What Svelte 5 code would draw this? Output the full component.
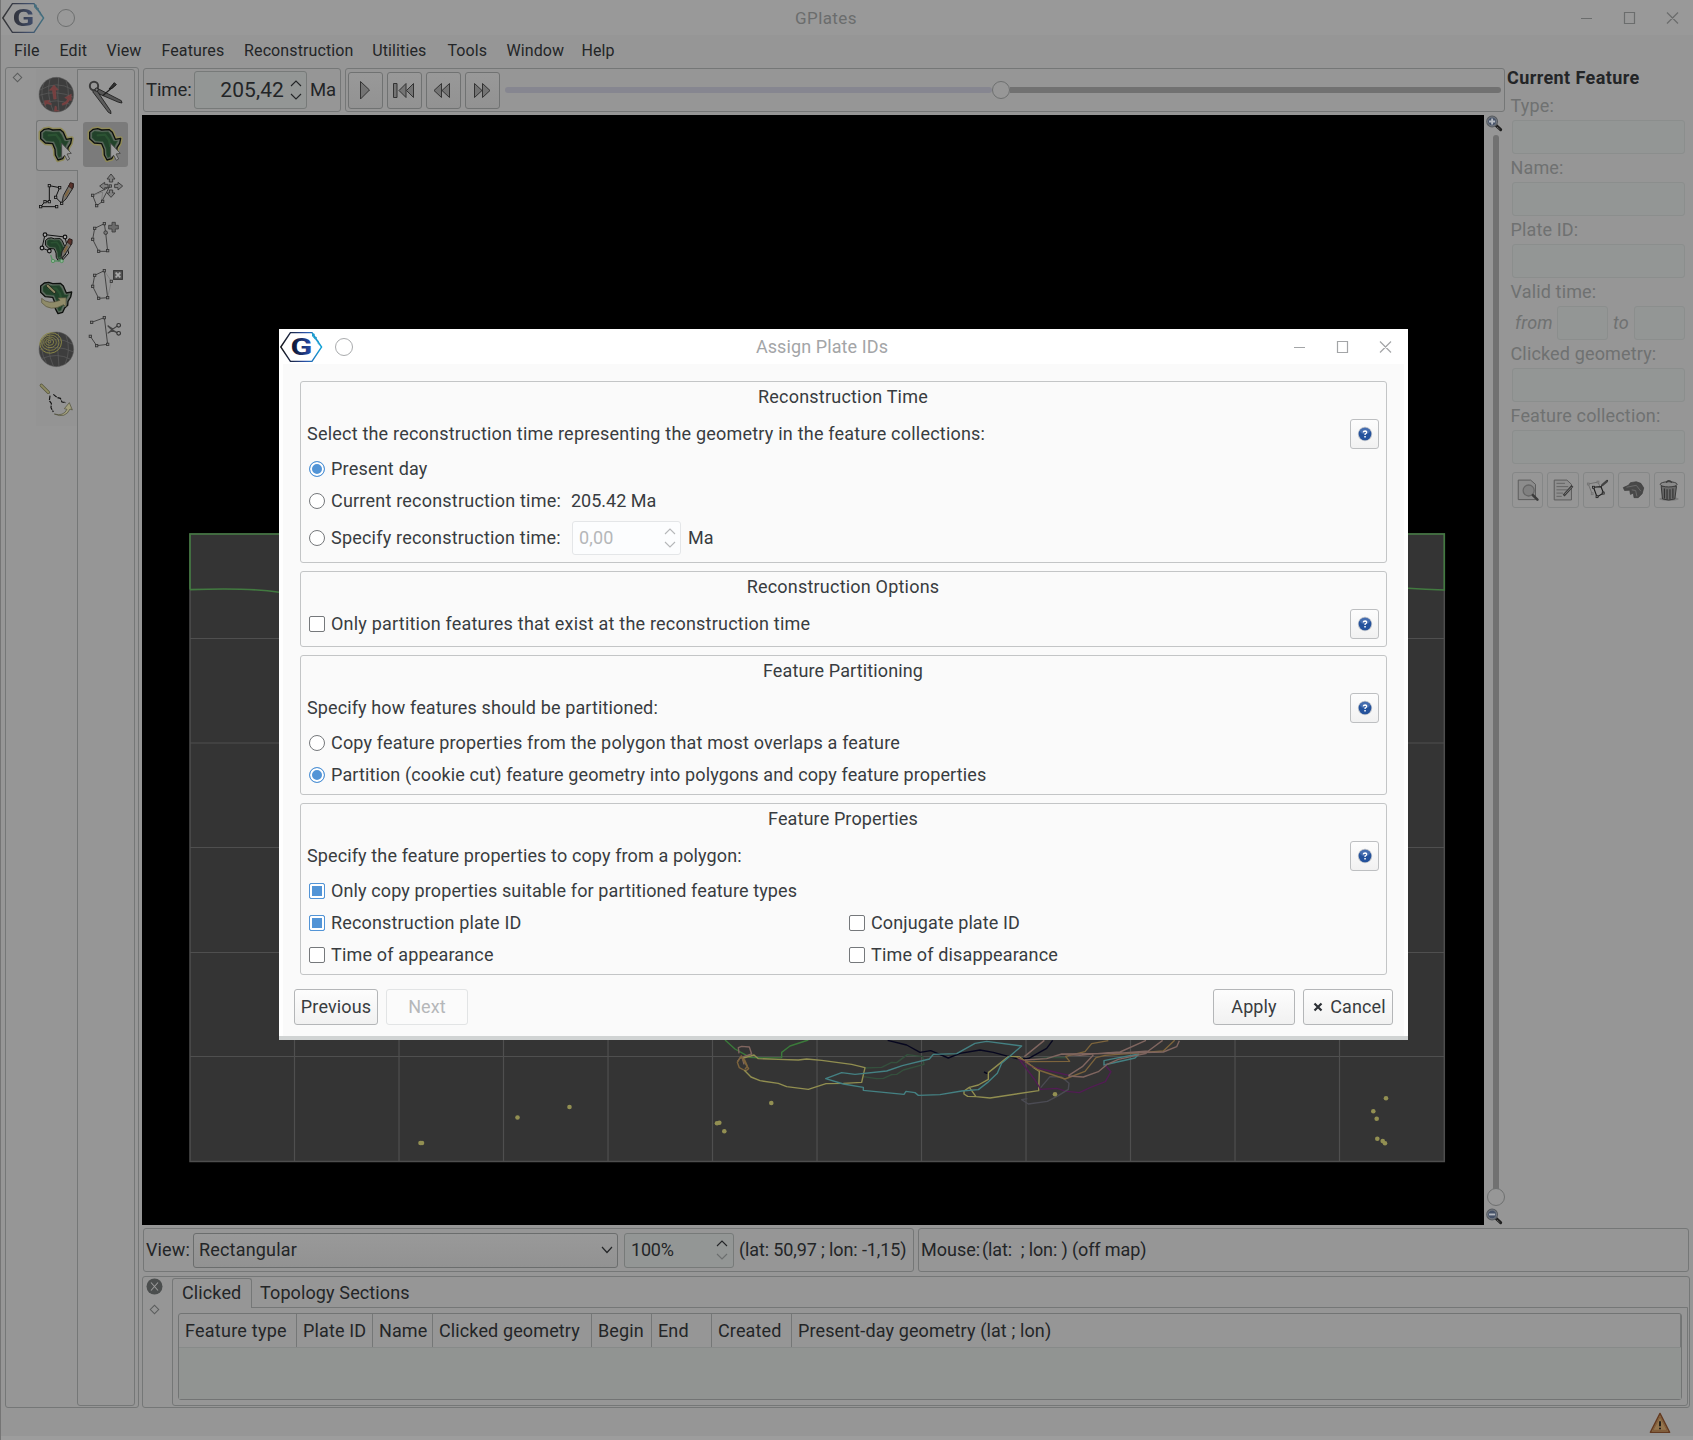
<script lang="ts">
  const menus = ['File', 'Edit', 'View', 'Features', 'Reconstruction', 'Utilities', 'Tools', 'Window', 'Help'];
  const menuWidths = [45.5, 47, 55, 82.6, 128.2, 75.2, 59, 75, 50];

  const africa = 'M122 217L133 208L146 206L158 210L181 209L190 217L199 238L215 235L212 250L204 263L203 275L194 283L188 296L174 300L166 285L165 268L158 251L136 249L122 236Z';

  const columns = [
    { label: 'Feature type', width: 118 },
    { label: 'Plate ID', width: 76 },
    { label: 'Name', width: 60 },
    { label: 'Clicked geometry', width: 159 },
    { label: 'Begin', width: 60 },
    { label: 'End', width: 60 },
    { label: 'Created', width: 80 },
    { label: 'Present-day geometry (lat ; lon)', width: 889 }
  ];

  const meridians = [294.5, 399, 503.5, 608, 712.5, 817, 921.5, 1026, 1130.5, 1235, 1339.5];
  const parallels = [638.5, 743, 847.5, 952.5, 1056.5];
  const points = [
    [420.5, 1143], [422, 1143], [517.5, 1117.5], [569.5, 1107], [771.3, 1103], [717, 1123.3], [719.3, 1122.7],
    [724.3, 1131.3], [1055, 1094.3], [1386, 1098.3], [1373.3, 1111.3], [1376.7, 1118.7], [1377.3, 1138.7],
    [1382.7, 1141], [1385, 1143.3]
  ];
</script>

{#snippet logo(id: string, dim: boolean)}
  <svg class="logo" class:dim viewBox="0 0 44 32" width="44" height="32">
    <defs>
      <linearGradient id={id} x1="0" y1="0" x2="1" y2="0">
        <stop offset="0" stop-color="#15171c" /><stop offset=".3" stop-color="#1c2a50" />
        <stop offset=".6" stop-color="#2a50a8" /><stop offset="1" stop-color="#12a5d8" />
      </linearGradient>
      <linearGradient id={id + 'g'} x1="0" y1="0" x2="1" y2="0">
        <stop offset="0" stop-color="#0c1024" /><stop offset="1" stop-color="#2750b4" />
      </linearGradient>
    </defs>
    <path d="M1.800 16L11.400 1.600H33L42.600 16L33 30.400H11.400Z" fill="none" stroke="url(#{id})" stroke-width="1.400" />
    <path d="M33 2L36 3L34.500 5.500L38 6L36.500 9L40 10L38.500 12.500L42.500 16L33 5Z" fill="#1ba0d0" />
    <text x="11.500" y="24.300" textLength="22" lengthAdjust="spacingAndGlyphs" class="logo-g" fill="url(#{id + 'g'})">G</text>
  </svg>
{/snippet}

{#snippet controls()}
  <svg class="controls" viewBox="0 0 100 14" width="100" height="14" fill="none" stroke="currentColor" stroke-width="1.2">
    <path d="M1 7.500H12M44.500 1.500H54.500V12.500H44.500ZM87 1.500L98 12.500M98 1.500L87 12.500" />
  </svg>
{/snippet}

{#snippet arrows(dimDown: boolean)}
  <svg viewBox="0 0 12 20" width="12" height="20" fill="none" stroke="currentColor" stroke-width="1.1">
    <path d="M1 6L6 1L11 6" /><path d="M1 14L6 19L11 14" opacity={dimDown ? 0.35 : 1} />
  </svg>
{/snippet}

{#snippet help()}
  <button class="help" aria-label="Help">
    <svg viewBox="0 0 16 16" width="16" height="16">
      <circle cx="8" cy="8" r="7.200" fill="#bfc3ca" />
      <circle cx="8" cy="8" r="6.300" fill="#24529c" />
      <ellipse cx="8" cy="5" rx="5" ry="3.300" fill="#5c80bd" opacity=".6" />
      <path d="M6.200 6.400Q6.400 5 8.100 5Q9.800 5.100 9.700 6.300Q9.600 7.300 8.100 8.100V9" fill="none" stroke="#fff" stroke-width="1.300" />
      <rect x="7.300" y="10" width="1.500" height="1.500" fill="#fff" />
    </svg>
  </button>
{/snippet}

{#snippet africaIcon(dy: number, dx: number, glow: boolean)}
  <g transform="translate({dx} {dy})" stroke-linejoin="round">
    {#if glow}<path d={africa} fill="#98925a" stroke="#8f8a58" stroke-width="13" />{/if}
    <path d={africa} fill="#5f6a60" stroke="#0d100d" stroke-width="4" />
    <path d="M129 219L137 213L158 216L178 215L185 224L194 243L206 243L198 257L196 271L187 279L183 290L176 293L172 283L171 266L162 245L139 243L129 233Z" fill="#22422a" stroke="#3a5a40" stroke-width="1.500" />
    <path d="M146 226L168 224L180 240L184 258" fill="none" stroke="#2b5232" stroke-width="7" stroke-linecap="round" />
  </g>
{/snippet}

{#snippet cursor(dx: number)}
  <path transform="translate({dx} 0)" d="M185 250V294L194 286L202 301L209 297L201 282L214 280Z" fill="#9c9c9c" stroke="#444" stroke-width="2.500" />
{/snippet}

{#snippet pencil(dy: number)}
  <g transform="translate(0 {dy})">
    <path d="M186 428L190 407L211 369L220 371V382L198 417Z" fill="#77736c" stroke="#222" stroke-width="3" />
    <path d="M206 379L211 368L220 371L217 387Z" fill="#5a332c" stroke="#2c1815" stroke-width="2" />
    <path d="M194 406L204 388L208 392L198 411Z" fill="#806640" />
  </g>
{/snippet}

{#snippet sphere(cy: number)}
  <circle cx="169" {cy} r="52" fill="#3d3d3d" stroke="#606060" stroke-width="1.500" />
  <g fill="none" stroke="#5e5e5e" stroke-width="2">
    <path transform="translate(0 {cy - 104})" d="M120 90Q170 60 216 88M117 106Q170 88 221 112M124 132Q172 112 212 134M150 56Q138 105 160 154M176 52Q170 105 177 156M198 62Q214 106 195 149M132 68Q116 105 139 144" />
  </g>
{/snippet}

{#snippet nodes(list: number[][])}
  {#each list as [x, y]}<rect x={x - 3.500} y={y - 3.500} width="7" height="7" fill="#888" />{/each}
{/snippet}

{#snippet magnifier(plus: boolean)}
  <svg viewBox="0 0 50 50" width="17" height="17">
    <path d="M28 29L43 43" stroke="#1d1d1d" stroke-width="9" stroke-linecap="round" />
    <path d="M33 36L41 43" stroke="#666" stroke-width="3" stroke-dasharray="3 2" />
    <circle cx="18" cy="19" r="15" fill="#455167" stroke="#575b60" stroke-width="5" />
    <circle cx="18" cy="19" r="13" fill="none" stroke="#848b92" stroke-width="2" />
    <path d={plus ? 'M9 19H27M18 10V28' : 'M9 19H27'} stroke="#b4b9c0" stroke-width="5.500" />
  </svg>
{/snippet}

{#snippet field(label: string)}
  <div class="flabel">{label}</div>
  <div class="fbox"></div>
{/snippet}

<div class="window">
  <header class="titlebar">
    {@render logo('lgMain', true)}
    <i class="pin"></i>
    <span class="title">GPlates</span>
    {@render controls()}
  </header>

  <nav class="menubar">
    {#each menus as m, i}<span style:width="{menuWidths[i]}px">{m}</span>{/each}
  </nav>

  <div class="body">
    <aside class="tools">
      <div class="grip"><i class="diamond"></i></div>
      <div class="tabs">
        <div class="tab">
          <svg viewBox="105 27 126 153" width="42" height="51">
            {@render sphere(104)}
            <g fill="#763f3f" stroke="#8a5050" stroke-width="1">
              <path d="M161 118L157 91L148 91L162 75L175 89L167 91L169 117Z" />
              <path d="M186 131Q202 125 202 117L194 113L214 102V122L208 120Q204 133 187 136Z" />
              <path d="M133 122L150 121L144 126L154 130V134L140 131L135 137Z" /><path d="M165 138L170 140V150L178 153L163 154Z" />
            </g>
          </svg>
        </div>
        <div class="tab on">
          <svg viewBox="105 180 126 153" width="42" height="51">{@render africaIcon(0, 0, true)}{@render cursor(0)}</svg>
        </div>
        <div class="tab">
          <svg viewBox="105 333 126 153" width="42" height="51">
            <path d="M122 440H170M122 440L135 425H148V377L179 383L167 412L185 430" fill="none" stroke="#111" stroke-width="3" />
            {#each [[122, 440], [170, 440], [135, 425], [148, 425], [148, 377], [179, 383], [167, 412], [185, 430]] as [x, y]}
              <rect x={x - 3.500} y={y - 3.500} width="7" height="7" fill="#999" stroke="#111" stroke-width="2.500" />
            {/each}
            {@render pencil(0)}
          </svg>
        </div>
        <div class="tab">
          <svg viewBox="105 486 126 153" width="42" height="51">
            <g transform="translate(46 381) scale(.74)">{@render africaIcon(0, 0, false)}</g>
            <path d="M158 603H186M158 603L152 585M186 603L180 590" stroke="#5a9066" stroke-width="4" />
            <g fill="#8fb698" stroke="#55915f" stroke-width="3"><circle cx="159" cy="603" r="5" /><circle cx="185" cy="603" r="5" /></g>
            <path d="M148 573L126 564L135 524L195 531L206 580L188 600" fill="none" stroke="#111" stroke-width="3" />
            {#each [[135, 524], [195, 531], [126, 564], [148, 573]] as [x, y]}<circle cx={x} cy={y} r="5.500" fill="#aaa" stroke="#111" stroke-width="3.500" />{/each}
            <g transform="translate(-4 168)">{@render pencil(0)}</g>
          </svg>
        </div>
        <div class="tab">
          <svg viewBox="105 639 126 153" width="42" height="51">
            {@render africaIcon(461, 0, false)}
            <path d="M143 677L163 696" stroke="#1c1c14" stroke-width="9" stroke-linecap="round" />
            <path d="M143 677L163 696" stroke="#8d8864" stroke-width="6" stroke-linecap="round" />
            <path d="M125 715Q145 735 180 721L174 714L198 713L198 741L191 734Q150 758 125 728Z" fill="#8f8b69" stroke="#55523c" stroke-width="2" />
          </svg>
        </div>
        <div class="tab">
          <svg viewBox="105 792 126 153" width="42" height="51">
            {@render sphere(868)}
            <g fill="none" stroke="#8b8845" stroke-width="2.600">
              <ellipse cx="152" cy="849" rx="33" ry="30" transform="rotate(-25 152 849)" />
              <ellipse cx="151" cy="848" rx="26" ry="23" /><ellipse cx="150" cy="847" rx="19" ry="16" /><ellipse cx="149" cy="846" rx="12" ry="10" /><circle cx="148" cy="845" r="4" />
            </g>
          </svg>
        </div>
        <div class="tab">
          <svg viewBox="105 945 126 153" width="42" height="51">
            <path d="M124 976L145 997" stroke="#55543c" stroke-width="10" stroke-linecap="round" />
            <path d="M124 976L145 997" stroke="#8e8b64" stroke-width="6" stroke-linecap="round" />
            <path d="M150 1007L148 1022L154 1030L153 1043L160 1056" fill="none" stroke="#111" stroke-width="3.500" stroke-dasharray="13 3" />
            <path d="M160 1003L172 1013L181 1015L186 1026L198 1028" fill="none" stroke="#111" stroke-width="3.500" stroke-dasharray="13 3" />
            <path d="M163 1062Q190 1070 201 1048L193 1046L208 1028L217 1050L210 1047Q196 1077 163 1062Z" fill="#a29f7e" stroke="#4c4b38" stroke-width="2" />
          </svg>
        </div>
      </div>
      <div class="palette">
        <div class="tool">
          <svg viewBox="249 45 135 135" width="45" height="45">
            <path d="M294 86L364 122L366 129L356 127L286 97Z" fill="#555" stroke="#1b1b1b" stroke-width="2.500" />
            <path d="M288 88L332 153L333 161L325 157L278 95Z" fill="#5c5c5c" stroke="#1b1b1b" stroke-width="2.500" />
            <path d="M308 107L342 78" stroke="#222" stroke-width="4" /><path d="M327 87L343 68L349 74L336 85Z" fill="#333" stroke="#1a1a1a" stroke-width="3" />
            <circle cx="282" cy="78" r="12.500" fill="none" stroke="#3a3a3a" stroke-width="6" /><circle cx="290" cy="89" r="5" fill="#777" stroke="#222" stroke-width="3" />
          </svg>
        </div>
        <div class="tool on"><svg viewBox="249 186 135 135" width="45" height="45">{@render africaIcon(0, 147, true)}{@render cursor(147)}</svg></div>
        <div class="tool">
          <svg viewBox="249 327 135 135" width="45" height="45" stroke="#333" stroke-width="2.500" fill="none">
            <path d="M290 437L278 406L328 381L304 427L290 437" /><path d="M308 396L304 427M278 406L308 396" stroke="#777" />
            <g fill="#808080" stroke="#404040" stroke-width="3"><path d="M333 342L345 357H338V366H328V357H321Z" /><path d="M333 412L345 399H338V390H328V399H321Z" /><path d="M299 378L314 367V373H324V383H314V390Z" /><path d="M368 378L354 367V373H344V383H354V390Z" /></g>
            {@render nodes([[278, 406], [290, 437], [308, 424], [331, 378]])}
          </svg>
        </div>
        <div class="tool">
          <svg viewBox="249 468 135 135" width="45" height="45" stroke="#333" stroke-width="2.500" fill="none">
            <path d="M313 491L284 505L278 538L296 574H323L317 518Z" />
            <path d="M336 487H346V496H355V507H346V516H336V507H326V496H336Z" fill="#6b6b6b" stroke="#3d3d3d" />
            {@render nodes([[313, 491], [284, 505], [278, 538], [296, 574], [323, 572]])}<circle cx="317" cy="518" r="5.500" fill="#777" />
          </svg>
        </div>
        <div class="tool">
          <svg viewBox="249 609 135 135" width="45" height="45" stroke="#333" stroke-width="2.500" fill="none">
            <path d="M313 632L284 646L278 679L296 715L323 713Z" /><path d="M313 632L334 664L323 713" stroke="#777" stroke-width="2" />
            <rect x="341" y="632" width="26" height="26" fill="#5a5a5a" stroke="#333" stroke-width="3.500" /><path d="M347 638L361 652M361 638L347 652" stroke="#aaa" stroke-width="5" />
            {@render nodes([[313, 632], [284, 646], [278, 679], [296, 715], [323, 713], [334, 664]])}
          </svg>
        </div>
        <div class="tool">
          <svg viewBox="249 750 135 135" width="45" height="45" stroke="#333" stroke-width="2.500" fill="none">
            <path d="M275 787L313 773L323 853L290 857L271 829" />
            <path d="M323 797Q335 812 351 818M323 820Q336 808 351 799M323 797L340 808M323 820L340 810" stroke="#444" stroke-width="3.500" />
            <circle cx="356" cy="796" r="5.500" stroke-width="3.500" /><circle cx="356" cy="820" r="5.500" stroke-width="3.500" />
            {@render nodes([[275, 787], [313, 773], [323, 853], [290, 857], [271, 829]])}
          </svg>
        </div>
      </div>
    </aside>

    <div class="main">
      <div class="upper">
        <div class="center">
          <div class="timebar">
            <div class="panel time">
              <span class="t-label">Time:</span>
              <div class="spin big"><span>205,42</span>{@render arrows(false)}</div>
              <span class="t-ma">Ma</span>
            </div>
            <div class="panel anim">
              <div class="pbtn"><svg viewBox="0 0 34 36" width="34" height="36"><path d="M12.500 9.500V27L21.500 18Z" /></svg></div>
              <div class="pbtn"><svg viewBox="0 0 34 36" width="34" height="36"><path d="M6.500 11.500H10V25.500H6.500ZM19 11.500V25.500L12 18.500ZM26.500 11.500V25.500L19.500 18.500Z" /></svg></div>
              <div class="pbtn"><svg viewBox="0 0 34 36" width="34" height="36"><path d="M15.500 11.500V25.500L8 18.500ZM23.500 11.500V25.500L16 18.500Z" /></svg></div>
              <div class="pbtn"><svg viewBox="0 0 34 36" width="34" height="36"><path d="M9.500 11.500V25.500L17 18.500ZM17.500 11.500V25.500L25 18.500Z" /></svg></div>
              <div class="hslider"><i class="played"></i><i class="knob"></i><i class="rest"></i></div>
            </div>
          </div>
          <div class="view">
            <svg class="map" viewBox="142 115 1342 1110" width="1342" height="1110">
              <rect x="142" y="115" width="1342" height="1110" fill="#000" />
              <rect x="190" y="534" width="1254.300" height="627.500" fill="#343434" stroke="#4e4e4e" stroke-width="1.500" />
              <g stroke="#4f4f4f" stroke-width="1.200">
                {#each meridians as x}<path d="M{x} 534V1161" />{/each}
                {#each parallels as y}<path d="M190 {y}H1444" />{/each}
              </g>
              <path d="M190 589.600V534H1444.300V590Q1425 589.500 1408 588.300M190 589.600Q250 587.500 279 592.300" fill="none" stroke="#427a40" stroke-width="1.600" />
              <g transform="translate(700 1030) scale(.33333)" fill="none" stroke-width="4.200" stroke-linejoin="round">
                <path stroke="#3b7a3a" d="M75 30L105 57L150 82L190 84L245 83V67L270 48L325 30" />
                <path stroke="#34503d" d="M492 114L545 112L575 97L590 98L622 74L668 80L672 103L610 120L590 133L575 134L550 145L530 146L490 140" />
                <path stroke="#34503d" d="M1000 90L1045 82L1100 83" />
                <path stroke="#07071f" d="M563 31L620 45L660 67L692 62L745 84L780 70L840 60L880 67L950 86L985 86L1040 55L1058 31M852 126L860 130L866 128" />
                <path stroke="#806660" d="M117 70L115 53L125 49L148 51L155 72L120 84L112 95M126 80L132 103" />
                <path stroke="#7d643c" d="M125 76L112 97L118 113L137 123L146 116L132 95L124 80L134 90L142 108L135 118" />
                <path stroke="#918e50" d="M130 84L152 78L162 75L175 86L235 88L295 90L320 87L365 91L455 103L495 113L485 157L430 160L378 161L325 178L260 170L235 160L180 152L153 141L133 121" />
                <path stroke="#918e50" d="M808 172L835 165L865 148V128L925 80L957 80L1000 112L1018 124L1016 182L870 204L828 200L808 172L792 183V192L803 199L828 200" />
                <path stroke="#448183" d="M377 146L425 128L465 133L560 123L607 107L688 87L700 73L770 71L825 40L860 34L965 48L905 100L892 130L862 158L835 179L785 183L720 194L655 196L645 188L618 184L612 193L490 181V172L430 162Z" />
                <path stroke="#448183" d="M1317 72L1305 84L1212 105V92L1245 85L1317 72" />
                <path stroke="#521c54" d="M955 82L995 110L1050 123L1110 137M955 84L1005 150L1022 178L1070 175L1100 184L1138 188L1170 173L1216 155L1233 125L1215 105" />
                <path stroke="#4b4b53" d="M1022 173L1050 140L1085 141L1107 160L1105 178L1075 197L1042 214L985 222L965 209L982 206" />
                <path stroke="#7d643c" d="M950 82L985 95L1109 94L1097 79L1155 65L1175 41L1225 32M975 95L1015 120L1095 147L1155 124L1188 83L1215 76L1390 63L1424 31" />
                <path stroke="#806660" d="M973 80L1033 31M975 90L1040 86L1085 72L1140 76L1200 70L1260 66L1338 31M1085 72L1250 70L1345 63L1388 31M1145 72L1390 66L1430 50L1438 32M1105 137L1147 110L1180 75M1105 138L1150 141L1195 125L1220 104L1255 88L1310 76L1340 70" />
              </g>
              <g fill="#928f52">{#each points as [x, y]}<circle cx={x} cy={y} r="2.300" />{/each}</g>
            </svg>
            <div class="zoomer">
              {@render magnifier(true)}
              <i class="vtrack"></i><i class="knob"></i>
              {@render magnifier(false)}
            </div>
          </div>
        </div>

        <aside class="feature">
          <h2>Current Feature</h2>
          {@render field('Type:')}
          {@render field('Name:')}
          {@render field('Plate ID:')}
          <div class="flabel">Valid time:</div>
          <div class="ftimes"><em>from</em><i class="fbox"></i><em class="to">to</em><i class="fbox"></i></div>
          {@render field('Clicked geometry:')}
          {@render field('Feature collection:')}
          <div class="fbtns">
            <div class="fbtn">
              <svg viewBox="225 592 80 76" width="26" height="25" fill="none"><path d="M235 598H273L288 611V658H235Z" fill="#8c8c8c" stroke="#5a5a5a" stroke-width="3" /><circle cx="267" cy="630" r="17" fill="#808080" stroke="#666" stroke-width="4" /><path d="M280 644L294 658" stroke="#3c3c3c" stroke-width="8" stroke-linecap="round" /></svg>
            </div>
            <div class="fbtn">
              <svg viewBox="330 592 80 76" width="26" height="25" fill="none"><path d="M343 598H382L396 611V659H343Z" fill="#8f8f8f" stroke="#5a5a5a" stroke-width="3" /><path d="M350 608H376M350 618H386M350 628H384M350 638H370M350 648H366" stroke="#5c5c5c" stroke-width="2.500" /><path d="M372 646L399 616" stroke="#3c3c3c" stroke-width="8" /><path d="M375 642L397 619" stroke="#777" stroke-width="3" /></svg>
            </div>
            <div class="fbtn">
              <svg viewBox="438 592 80 76" width="26" height="25" fill="none"><path d="M460 640L448 610L478 604L485 620" stroke="#6f6f6f" stroke-width="3" /><g fill="#8c8c8c" stroke="#6f6f6f" stroke-width="2"><rect x="445" y="607" width="6" height="6" /><rect x="475" y="601" width="6" height="6" /><rect x="457" y="637" width="6" height="6" /></g><path d="M464 620L487 618L495 638L475 650ZM487 618L508 598" stroke="#1d1d1d" stroke-width="3.500" /><path d="M490 614L507 600" stroke="#444" stroke-width="7" /><g fill="#969696" stroke="#222" stroke-width="2.500"><rect x="461" y="617" width="6" height="6" /><rect x="491" y="635" width="6" height="6" /><rect x="472" y="646" width="6" height="6" /></g></svg>
            </div>
            <div class="fbtn">
              <svg viewBox="543 592 80 76" width="26" height="25"><path d="M550 621L566 614L572 606L590 603L604 608L613 622L608 640L596 652H583L581 638L572 642L570 629L554 630Z" fill="#484848" stroke="#3a3a3a" stroke-width="2" /><path d="M560 620L590 614L604 632M576 628L588 630L592 648" fill="none" stroke="#6a6a6a" stroke-width="3" /></svg>
            </div>
            <div class="fbtn">
              <svg viewBox="648 592 80 76" width="26" height="25" fill="none"><ellipse cx="688" cy="656" rx="30" ry="6" fill="#7c7c7c" /><path d="M664 617L668 656Q687 663 706 656L711 617Z" fill="#6a6a6a" stroke="#363636" stroke-width="3" /><path d="M674 624V655M682 626V658M691 626V658M700 624V655" stroke="#333" stroke-width="3.500" /><ellipse cx="687" cy="611" rx="26" ry="8" fill="#8a8a8a" stroke="#3c3c3c" stroke-width="3" /><path d="M679 606Q687 594 697 606" stroke="#3c3c3c" stroke-width="4" /></svg>
            </div>
          </div>
        </aside>
      </div>

      <div class="viewbar">
        <div class="panel vb1">
          <span class="v-label">View:</span>
          <div class="combo"><span>Rectangular</span><svg viewBox="0 0 12 8" width="12" height="8" fill="none" stroke="currentColor" stroke-width="1.200"><path d="M1 1L6 6.500L11 1" /></svg></div>
          <div class="spin small"><span>100%</span>{@render arrows(true)}</div>
          <span class="coords">(lat: 50,97 ; lon: -1,15)</span>
        </div>
        <div class="panel vb2"><span class="mouse">Mouse:</span><span class="coords">(lat:&nbsp; ; lon: ) (off map)</span></div>
      </div>

      <div class="dock">
        <div class="dgrip">
          <svg viewBox="0 0 17 17" width="17" height="17"><circle cx="8.500" cy="8.500" r="8" fill="#4b4e4e" /><path d="M5 4.500L12 12.500M12 4.500L5 12.500" stroke="#999" stroke-width="1.100" /></svg>
          <i class="diamond"></i>
        </div>
        <div class="dcontent">
          <div class="dtabs"><span class="dtab on">Clicked</span><span class="dtab topo">Topology Sections</span></div>
          <div class="dpane">
            <div class="table">
              <div class="thead">{#each columns as c}<span style:width="{c.width}px">{c.label}</span>{/each}</div>
              <div class="tbody"></div>
            </div>
          </div>
        </div>
      </div>
    </div>
  </div>

  <footer class="status">
    <svg viewBox="0 0 66 64" width="22" height="22"><path d="M33 3L62 60H4Z" fill="#8a6a45" stroke="#643a20" stroke-width="4" stroke-linejoin="round" /><path d="M33 14L54 54H12Z" fill="#94754e" stroke="#7a5433" stroke-width="2" /><path d="M33 27V42M33 46V51" stroke="#111" stroke-width="5" /></svg>
  </footer>

  <div class="dialog">
    <header class="titlebar dlg">
      {@render logo('lgDlg', false)}
      <i class="pin"></i>
      <span class="title">Assign Plate IDs</span>
      {@render controls()}
    </header>
    <div class="dbody">
      <section class="g1">
        <h3 class="wide">Reconstruction Time</h3>
        <div class="lead"><span class="wide">Select the reconstruction time representing the geometry in the feature collections:</span>{@render help()}</div>
        <div class="opt first"><i class="radio on"></i><span class="wide">Present day</span></div>
        <div class="opt"><i class="radio"></i><span class="fixed wide">Current reconstruction time:</span><span class="tight">205.42 Ma</span></div>
        <div class="opt tall"><i class="radio"></i><span class="fixed wide">Specify reconstruction time:</span><div class="spin off"><span>0,00</span>{@render arrows(false)}</div><span class="tight">Ma</span></div>
      </section>
      <section class="g2">
        <h3 class="wide">Reconstruction Options</h3>
        <div class="lead opt2"><i class="check"></i><span class="wide">Only partition features that exist at the reconstruction time</span>{@render help()}</div>
      </section>
      <section class="g3">
        <h3>Feature Partitioning</h3>
        <div class="lead"><span>Specify how features should be partitioned:</span>{@render help()}</div>
        <div class="opt first"><i class="radio"></i><span class="mid">Copy feature properties from the polygon that most overlaps a feature</span></div>
        <div class="opt"><i class="radio on"></i><span>Partition (cookie cut) feature geometry into polygons and copy feature properties</span></div>
      </section>
      <section class="g4">
        <h3>Feature Properties</h3>
        <div class="lead"><span>Specify the feature properties to copy from a polygon:</span>{@render help()}</div>
        <div class="opt first"><i class="check on"></i><span>Only copy properties suitable for partitioned feature types</span></div>
        <div class="pair">
          <div class="opt"><i class="check on"></i><span class="mid">Reconstruction plate ID</span></div>
          <div class="opt"><i class="check"></i><span>Conjugate plate ID</span></div>
          <div class="opt"><i class="check"></i><span class="mid">Time of appearance</span></div>
          <div class="opt"><i class="check"></i><span class="mid">Time of disappearance</span></div>
        </div>
      </section>
      <div class="buttons">
        <button class="prev">Previous</button>
        <button class="next" disabled>Next</button>
        <span class="grow"></span>
        <button class="apply">Apply</button>
        <button class="cancel"><svg viewBox="0 0 10 10" width="10" height="10"><path d="M1.500 1.500L8.500 8.500M8.500 1.500L1.500 8.500" stroke="#2d3136" stroke-width="2.200" /></svg>Cancel</button>
      </div>
    </div>
  </div>
</div>

<style>
  :global(body) { margin: 0; background: #969696; }
  .window, .window :global(*) { box-sizing: border-box; }
  .window {
    position: relative; width: 1693px; height: 1440px; overflow: hidden; display: flex; flex-direction: column;
    background: #969696; color: #232527; font: 18px/22px Roboto, sans-serif; white-space: nowrap;
    border-left: 1px solid #757575; letter-spacing: .12px;
  }
  svg { display: block; flex: none; }
  i { display: block; flex: none; font-style: normal; }

  .titlebar { position: relative; display: flex; align-items: center; height: 35px; background: #999; color: #6b6d6d; padding: 1px 13px 0 0; flex: none; }
  .titlebar .title { position: absolute; left: 0; right: 0; text-align: center; font-size: 17px; padding-right: 42px; top: 7px; letter-spacing: .4px; }
  .logo.dim { opacity: .72; filter: brightness(.62) saturate(.7); }
  .logo-g { font: 700 24px Roboto, sans-serif; }
  .pin { width: 18px; height: 18px; border: 1.300px solid #6d6f6f; border-radius: 50%; margin-left: 11.500px; }
  .controls { margin-left: auto; }

  .menubar { display: flex; height: 32px; padding: 5px 0 0 13px; font-size: 16px; flex: none; letter-spacing: .1px; }
  .menubar span { flex: none; }

  .body { display: flex; height: 1341px; padding-left: 4px; flex: none; }
  .tools { display: flex; width: 134px; height: 1341px; border: 1px solid #757777; border-radius: 3px; padding: 1px 3px 1px 0; }
  .grip { width: 30px; padding: 5px 0 0 8px; }
  .diamond { width: 7px; height: 7px; border: 1px solid #5b5d5d; transform: rotate(45deg); }
  .tabs { width: 42px; margin-right: -1px; z-index: 1; }
  .tab { height: 51px; width: 41px; overflow: hidden; background: #949494; }
  .tab svg { margin-left: -1px; }
  .tab.on { border: 1px solid #757777; border-right: 0; width: 42px; background: #969696; border-radius: 3px 0 0 3px; }
  .tab.on svg { margin: -1px 0 0 -2px; }
  .palette { flex: 1; border: 1px solid #757777; border-radius: 0 3px 3px 3px; padding: 5px 0 0 5px; display: flex; flex-direction: column; gap: 2px; }
  .tool { width: 45px; height: 45px; }
  .tool.on { background: #7b7b7b; border-radius: 3px; }

  .main { width: 1551px; margin-left: 3px; display: flex; flex-direction: column; }
  .upper { display: flex; height: 1158px; }
  .center { width: 1363px; }
  .panel { border: 1px solid #757777; border-radius: 3px; display: flex; align-items: center; }
  .timebar { display: flex; gap: 4px; height: 45px; padding: 1px 0 0 1px; }
  .timebar .panel { height: 44px; }
  .time { width: 198px; padding-left: 2px; font-size: 18.500px; letter-spacing: -.1px; }
  .t-label { width: 48px; }
  .t-ma { margin-left: 3px; }
  .spin { display: flex; align-items: center; border: 1px solid #777a79; border-radius: 3px; background: #939695; color: #232527; }
  .spin.big { width: 113px; height: 38px; justify-content: flex-end; padding-right: 4px; gap: 6px; font-size: 21px; letter-spacing: .1px; }
  .anim { width: 1160px; gap: 4px; padding-left: 2px; }
  .pbtn { width: 35px; height: 37px; border: 1px solid #707272; border-radius: 3px; background: linear-gradient(#999, #929292); flex: none; }
  .pbtn svg { margin: -1px 0 0 -1px; }
  .pbtn path { fill: #747474; stroke: #333; stroke-width: 1; }
  .hslider { display: flex; align-items: center; margin-left: 1px; width: 997px; }
  .played { width: 487px; height: 6px; border-radius: 3px; background: #868690; }
  .rest { width: 491px; height: 6px; border-radius: 0 3px 3px 0; background: #717171; }
  .knob { width: 18px; height: 18px; border: 1.500px solid #6e7070; border-radius: 50%; background: #979797; }
  .view { display: flex; padding-top: 3px; height: 1113px; }
  .zoomer { width: 21px; padding: 0 0 0 2px; display: flex; flex-direction: column; height: 1110px; }
  .zoomer .vtrack { width: 6px; height: 1054px; margin: 3px 0 0 7px; border-radius: 3px 3px 0 0; background: #717171; }
  .zoomer .knob { margin: -1px 0 2px 1px; }

  .feature { width: 188px; padding: 0 8px 0 2px; color: #6f7171; }
  h2 { margin: 0; font: 700 18px/22px Roboto, sans-serif; color: #232527; letter-spacing: .4px; height: 28px; }
  .flabel { height: 25px; line-height: 21px; padding-left: 3.500px; letter-spacing: .15px; }
  .fbox { height: 34px; margin: 0 0 3px 5px; border: 1px solid #8b8e8d; border-radius: 3px; background: #939695; width: 173px; }
  .ftimes { display: flex; height: 37px; }
  .ftimes em { width: 42px; margin-left: 8px; line-height: 33px; letter-spacing: .2px; }
  .ftimes em.to { width: 16px; margin-left: 5px; }
  .ftimes .fbox { width: 51px; margin-left: 0; }
  .ftimes .to + .fbox { margin-left: 5px; }
  .fbtns { display: flex; gap: 4px; margin: 8px 0 0 5px; }
  .fbtn { width: 31.400px; height: 36px; border: 1px solid #858787; border-radius: 3px; display: flex; align-items: center; justify-content: center; }

  .viewbar { display: flex; gap: 4px; padding: 3px 0 0 1px; height: 51px; }
  .viewbar .panel { height: 44px; }
  .vb1 { width: 771px; padding-left: 2px; }
  .v-label { width: 47px; }
  .combo { width: 425px; height: 35px; border: 1px solid #6b6d6d; border-radius: 3px; display: flex; align-items: center; justify-content: space-between; padding: 0 4px 0 5px; background: linear-gradient(#999, #929292); letter-spacing: .18px; }
  .spin.small { width: 110px; height: 35px; margin: 0 5px 0 6px; justify-content: space-between; padding: 0 5px 0 6px; letter-spacing: -.2px; }
  .vb2 { width: 771px; padding-left: 2px; }
  .mouse { width: 61px; letter-spacing: 0; }
  .coords { letter-spacing: -.12px; }

  .dock { display: flex; width: 1548px; height: 132px; border: 1px solid #757777; border-radius: 3px; }
  .dgrip { width: 29px; padding: 1px 0 0 3px; }
  .dgrip .diamond { margin: 11px 0 0 5px; }
  .dcontent { width: 1516px; padding-top: 1px; }
  .dtabs { display: flex; height: 30px; }
  .dtab { line-height: 30px; padding-left: 9px; }
  .dtab.on { width: 80px; height: 30px; line-height: 28px; border: 1px solid #757777; border-bottom: 0; border-radius: 3px 3px 0 0; background: #969696; z-index: 1; }
  .dtab.topo { padding-left: 8px; line-height: 29px; }
  .dpane { margin-top: -1px; height: 99px; border: 1px solid #757777; border-radius: 0 0 3px 3px; padding: 5px; }
  .table { height: 87px; width: 1504px; border: 1px solid #727474; border-radius: 3px; }
  .thead { display: flex; height: 34px; line-height: 33px; border-bottom: 1px solid #878a89; }
  .thead span { border-right: 1px solid #757777; padding-left: 6px; flex: none; }
  .thead span:first-child { letter-spacing: .25px; }
  .tbody { height: 51px; background: #919492; }
  .status { height: 32px; padding: 4px 22px 0 0; display: flex; justify-content: flex-end; border-bottom: 4px solid #9d9d9d; }

  .dialog { position: absolute; left: 278px; top: 329px; width: 1129px; height: 711px; background: #fff; border-bottom: 4px solid #d0d3d3; color: #383c40; }
  .titlebar.dlg { background: #fff; color: #a3a5a7; padding: 1px 15px 0 0; }
  .dlg .title { font-size: 18px; padding-right: 43px; letter-spacing: .1px; top: 7px; }
  .dlg .pin { border-color: #a9abad; margin-left: 12px; }
  .dbody { margin: 0 4px; height: 678px; background: #fafafa; padding: 17px 17px 0; height: 672px; }
  section { border: 1px solid #c3c5c6; border-radius: 3px; padding: 0 7px 0 6px; margin-bottom: 8px; }
  .g1 { height: 182px; } .g2 { height: 76px; } .g3 { height: 140px; } .g4 { height: 172px; }
  h3 { margin: 0; font: 400 18px/22px Roboto, sans-serif; text-align: center; padding-top: 4px; height: 36px; }
  .wide { letter-spacing: .21px; }
  .mid { letter-spacing: .165px; }
  .tight { letter-spacing: 0; }
  .lead { display: flex; align-items: center; justify-content: space-between; height: 31px; }
  .lead.opt2 .help { margin-left: auto; }
  .help { width: 29px; height: 30px; padding: 0; display: flex; align-items: center; justify-content: center; border: 1px solid #bdbfc1; border-radius: 3px; background: linear-gradient(#fdfdfd, #f1f1f1); }
  .opt { display: flex; align-items: center; height: 32px; }
  .opt.first { margin-top: 4px; }
  .opt.tall { height: 42px; }
  .radio, .check { width: 16px; height: 16px; border: 1px solid #75787b; background: #fff; margin: 0 6px 0 2px; border-radius: 2px; }
  .radio { border-radius: 50%; }
  .radio.on, .check.on { border-color: #5294d6; background: #5294d6; box-shadow: inset 0 0 0 2px #fff; }
  .fixed { width: 240px; }
  .spin.off { width: 109px; height: 34px; background: #fcfdfe; border-color: #e4e6e8; color: #b5b7b9; justify-content: space-between; padding: 0 4px 0 6px; margin: 0 7px 0 1px; }
  .pair { display: grid; grid-template-columns: 540px 1fr; }
  .buttons { display: flex; height: 36px; margin: 14px -6px 0; width: 1099px; }
  .buttons button { font: 18px/22px Roboto, sans-serif; letter-spacing: .12px; color: #383c40; border: 1px solid #b4b6b8; border-radius: 3px; background: linear-gradient(#fdfdfd, #f1f1f1); padding: 0; display: flex; align-items: center; justify-content: center; }
  .prev { width: 84px; margin-right: 8px; }
  .buttons .next { width: 82px; border-color: #e2e4e5; color: #b5b7b9; background: #fbfbfb; }
  .grow { flex: 1; }
  .apply { width: 82px; margin-right: 8px; }
  .buttons .cancel { width: 90px; gap: 7px; padding-left: 3px; }
</style>
